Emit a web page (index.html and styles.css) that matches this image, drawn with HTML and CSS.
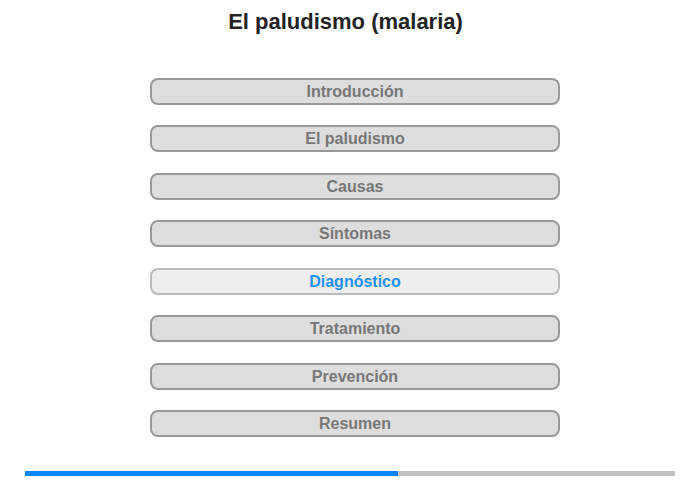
FILE: index.html
```html
<!DOCTYPE html>
<html lang="es">
<head>
<meta charset="utf-8">
<title>El paludismo (malaria)</title>
<link rel="stylesheet" href="styles.css">
</head>
<body>
<div class="page">
  <h1 class="title">El paludismo (malaria)</h1>
  <nav class="menu">
    <div class="item">Introducción</div>
    <div class="item">El paludismo</div>
    <div class="item">Causas</div>
    <div class="item">Síntomas</div>
    <div class="item active">Diagnóstico</div>
    <div class="item">Tratamiento</div>
    <div class="item">Prevención</div>
    <div class="item">Resumen</div>
  </nav>
  <div class="progress"><div class="fill" style="width:57.4%"></div></div>
</div>
</body>
</html>
```
FILE: styles.css
```css
html, body {
  margin: 0;
  padding: 0;
  background: #fff;
}
.page {
  width: 700px;
  height: 480px;
  font-family: "Liberation Sans", Arial, sans-serif;
  display: flex;
  flex-direction: column;
  align-items: center;
}
.title {
  margin: 9px 9px 0 0;
  font-size: 22px;
  line-height: 26px;
  font-weight: bold;
  color: #222;
}
.menu {
  margin: 43px 0 0 10px;
  display: flex;
  flex-direction: column;
  gap: 20.45px;
}
.item {
  box-sizing: border-box;
  width: 410px;
  height: 27px;
  border: 2px solid #999;
  border-radius: 8px;
  background: #ddd;
  color: #777;
  font-size: 16px;
  font-weight: bold;
  line-height: 23px;
  text-align: center;
}
.item.active {
  background: #eee;
  border-color: #bbb;
  color: #1e90ff;
}
.progress {
  margin-top: 34px;
  width: 650px;
  height: 5px;
  background: #c2c2c2;
}
.fill {
  height: 100%;
  background: #0a84ff;
}
```
